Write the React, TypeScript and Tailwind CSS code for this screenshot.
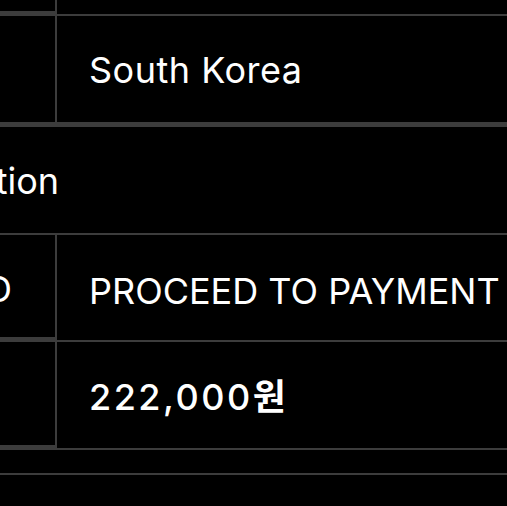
import React from "react";

const line = "border-[#3c3c3c]";

export default function App() {
  return (
    <div
      className="w-[507px] h-[506px] overflow-hidden bg-black text-white"
      style={{ fontFamily: 'Inter, "Noto Sans CJK KR", sans-serif' }}
    >
      {/* previous row (only its bottom edge is visible) */}
      <div className={`flex h-[16px] border-b-2 ${line}`}>
        <div className={`w-[57px] shrink-0 border-r-2 border-b-[3px] ${line}`} />
        <div className="flex-1" />
      </div>

      {/* country */}
      <div className={`flex h-[111px] border-b-[5px] ${line}`}>
        <div className={`w-[57px] shrink-0 border-r-2 ${line}`} />
        <div className="flex-1 flex items-center pl-[32px] pt-[1px] text-[36px] leading-none tracking-[0.5px] whitespace-nowrap">
          South Korea
        </div>
      </div>

      {/* section heading */}
      <div className={`flex h-[108px] border-b-2 ${line}`}>
        <div className="w-[59px] shrink-0 flex items-center justify-end pt-[2px] text-[36px] leading-none whitespace-nowrap">
          Payment Information
        </div>
      </div>

      {/* payment method */}
      <div className={`flex h-[107px] border-b-2 ${line}`}>
        <div
          className={`w-[57px] shrink-0 border-r-2 border-b-[3px] ${line} flex items-center justify-end pr-[43px] pt-[6px] text-[36px] leading-none whitespace-nowrap`}
        >
          METHOD
        </div>
        <div className="flex-1 flex items-center pl-[32px] pt-[6px] text-[36px] leading-none whitespace-nowrap">
          PROCEED TO PAYMENT
        </div>
      </div>

      {/* total */}
      <div className={`flex h-[108px] border-b-2 ${line}`}>
        <div className={`w-[57px] shrink-0 border-r-2 border-b-[3px] ${line}`} />
        <div className="flex-1 flex items-center pl-[32px] pt-[4px] text-[36px] font-medium leading-none tracking-[2.5px] whitespace-nowrap">
          222,000<span className="font-bold tracking-normal">원</span>
        </div>
      </div>

      {/* spacer row */}
      <div className={`h-[25px] border-b-2 ${line}`} />
    </div>
  );
}
